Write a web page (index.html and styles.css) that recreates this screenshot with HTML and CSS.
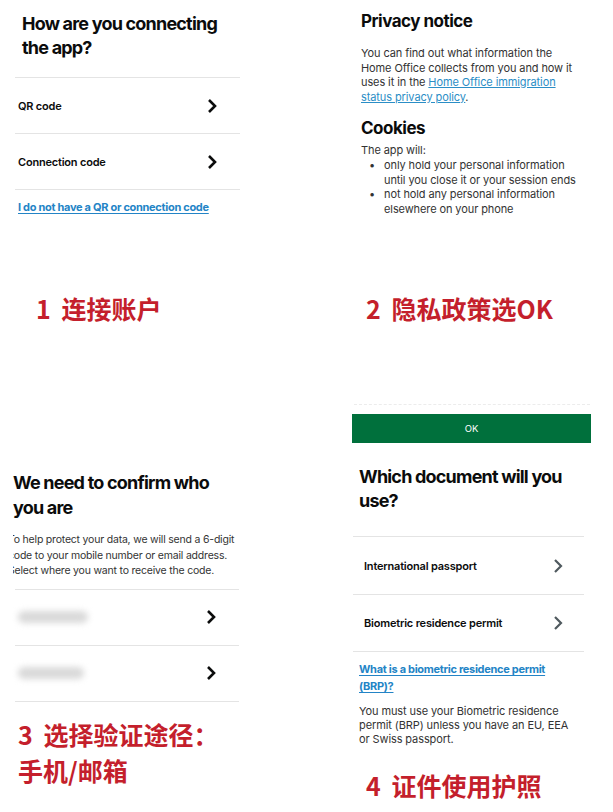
FILE: index.html
```html
<!DOCTYPE html>
<html lang="zh-CN">
<head>
  <meta charset="UTF-8">
  <meta name="viewport" content="width=device-width, initial-scale=1.0">
  <title>BRP 登录步骤</title>
  <link rel="stylesheet" href="styles.css">
</head>
<body>
  <div class="sheet">
    <div class="col col-left">
      <section class="shot shot-connect">
        <h2 class="title">How are you connecting the app?</h2>
        <ul class="choices">
          <li class="choice"><span>QR code</span><svg class="chev" viewBox="0 0 12 16"><path d="M3 2l6 6-6 6"/></svg></li>
          <li class="choice"><span>Connection code</span><svg class="chev" viewBox="0 0 12 16"><path d="M3 2l6 6-6 6"/></svg></li>
        </ul>
        <a class="link" href="#">I do not have a QR or connection code</a>
      </section>

      <p class="step step-1">1 连接账户</p>

      <section class="shot shot-confirm">
        <h2 class="title">We need to confirm who you are</h2>
        <div class="clip">
          <p class="body">To help protect your data, we will send a 6-digit<br>code to your mobile number or email address.<br>Select where you want to receive the code.</p>
        </div>
        <ul class="choices">
          <li class="choice"><span class="blur"></span><svg class="chev" viewBox="0 0 12 16"><path d="M3 2l6 6-6 6"/></svg></li>
          <li class="choice"><span class="blur blur-short"></span><svg class="chev" viewBox="0 0 12 16"><path d="M3 2l6 6-6 6"/></svg></li>
        </ul>
      </section>

      <p class="step step-3">3 选择验证途径：<br>手机/邮箱</p>
    </div>

    <div class="col col-right">
      <section class="shot shot-privacy">
        <h2 class="subtitle">Privacy notice</h2>
        <p class="ios intro">You can find out what information the<br>Home Office collects from you and how it<br>uses it in the <a href="#">Home Office immigration<br>status privacy policy</a>.</p>
        <h2 class="subtitle cookies">Cookies</h2>
        <p class="ios lead">The app will:</p>
        <ul class="bullets ios">
          <li>only hold your personal information<br>until you close it or your session ends</li>
          <li>not hold any personal information<br>elsewhere on your phone</li>
        </ul>
      </section>

      <p class="step step-2">2 隐私政策选OK</p>

      <section class="shot shot-document">
        <div class="cut"></div>
        <button class="ok">OK</button>
        <h2 class="title">Which document will you use?</h2>
        <ul class="choices tall">
          <li class="choice"><span>International passport</span><svg class="chev grey" viewBox="0 0 12 16"><path d="M3 2l6 6-6 6"/></svg></li>
          <li class="choice"><span>Biometric residence permit</span><svg class="chev grey" viewBox="0 0 12 16"><path d="M3 2l6 6-6 6"/></svg></li>
        </ul>
        <a class="link link-brp" href="#">What is a biometric residence permit<br>(BRP)?</a>
        <p class="ios note">You must use your Biometric residence<br>permit (BRP) unless you have an EU, EEA<br>or Swiss passport.</p>
      </section>

      <p class="step step-4">4 证件使用护照</p>
    </div>
  </div>
</body>
</html>
```

FILE: styles.css
```css
* { box-sizing: border-box; }
body { margin: 0; background: #fff; color: #0b0c0c; font-family: Inter, "Liberation Sans", sans-serif; }
.sheet { display: grid; grid-template-columns: 340px 273px; width: 613px; height: 812px; overflow: hidden; }
.col { display: flex; flex-direction: column; }
.col-left { padding-left: 15px; }
.col-right { padding-left: 12px; }

ul { list-style: none; margin: 0; padding: 0; }
p, h2 { margin: 0; }

.title { font-size: 18px; line-height: 24px; font-weight: 700; letter-spacing: -0.8px; color: #0b0c0c; }
.shot-connect { width: 225px; margin-top: 12px; }
.shot-connect .title { padding-left: 7px; }

.choices { margin-top: 17px; }
.choice { display: flex; align-items: center; justify-content: space-between; height: 56px; border-top: 1px solid #e4e4e4; padding: 0 22px 0 3px; font-size: 11px; font-weight: 600; letter-spacing: -0.2px; }
.choice:last-child { border-bottom: 1px solid #e4e4e4; height: 57px; }
.chev { width: 12px; height: 16px; fill: none; stroke: #0b0c0c; stroke-width: 2.6; }
.chev.grey { stroke: #505a5f; stroke-width: 2.2; }

.link { display: block; color: #2384c6; font-size: 11px; font-weight: 700; letter-spacing: -0.3px; text-decoration: underline; text-underline-offset: 2px; }
.shot-connect .link { margin-top: 9px; padding-left: 3px; line-height: 16px; }

.step { font-family: "Noto Sans CJK SC", sans-serif; font-weight: 700; color: #c41f2c; font-size: 25px; line-height: 32px; word-spacing: 5px; }
.step-1 { margin-top: 77px; padding-left: 21px; }
.step-2 { margin-top: 76px; padding-left: 14px; }
.step-3 { margin-top: 14px; padding-left: 3px; line-height: 36px; }
.step-4 { margin-top: 23px; padding-left: 14px; }

.shot-confirm { width: 224px; margin-top: 146px; }
.shot-confirm .title { margin-left: -2px; line-height: 25px; }
.clip { overflow: hidden; margin-top: 12px; margin-left: -2px; }
.body { margin-left: -5px; font-size: 10.5px; line-height: 15.5px; color: #333; letter-spacing: -0.2px; white-space: nowrap; }
.shot-confirm .choices { margin-top: 10px; }
.blur { display: block; width: 70px; height: 12px; border-radius: 6px; background: #d9d9d9; filter: blur(3px); }
.blur-short { width: 66px; }

.shot-privacy { padding-left: 9px; margin-top: 10px; white-space: nowrap; }
.subtitle { font-size: 17px; line-height: 22px; font-weight: 700; letter-spacing: -0.5px; }
.ios { font-size: 11px; line-height: 14.6px; color: #333; letter-spacing: -0.1px; }
.ios a { color: #2b8ec6; }
.intro { margin-top: 14px; }
.cookies { margin-top: 13px; }
.lead { margin-top: 4px; }
.bullets li { position: relative; padding-left: 23px; }
.bullets li::before { content: "•"; position: absolute; left: 8px; top: 0; }

.shot-document { width: 240px; margin-top: 80px; }
.cut { height: 1px; margin: 0 2px; border-top: 1px dashed #ececec; }
.ok { display: block; width: 239px; height: 29px; margin-top: 9px; border: none; background: #00703c; color: #fff; font-family: inherit; font-size: 9.5px; }
.shot-document .title { margin-top: 22px; padding-left: 7px; }
.choices.tall { margin-top: 23px; width: 231px; margin-left: 1px; }
.tall .choice { height: 58px; padding: 0 20px 0 11px; }
.tall .choice:last-child { height: 58px; }
.link-brp { margin-top: 9px; padding-left: 7px; line-height: 17px; }
.note { margin-top: 9px; padding-left: 7px; line-height: 14px; }
```
